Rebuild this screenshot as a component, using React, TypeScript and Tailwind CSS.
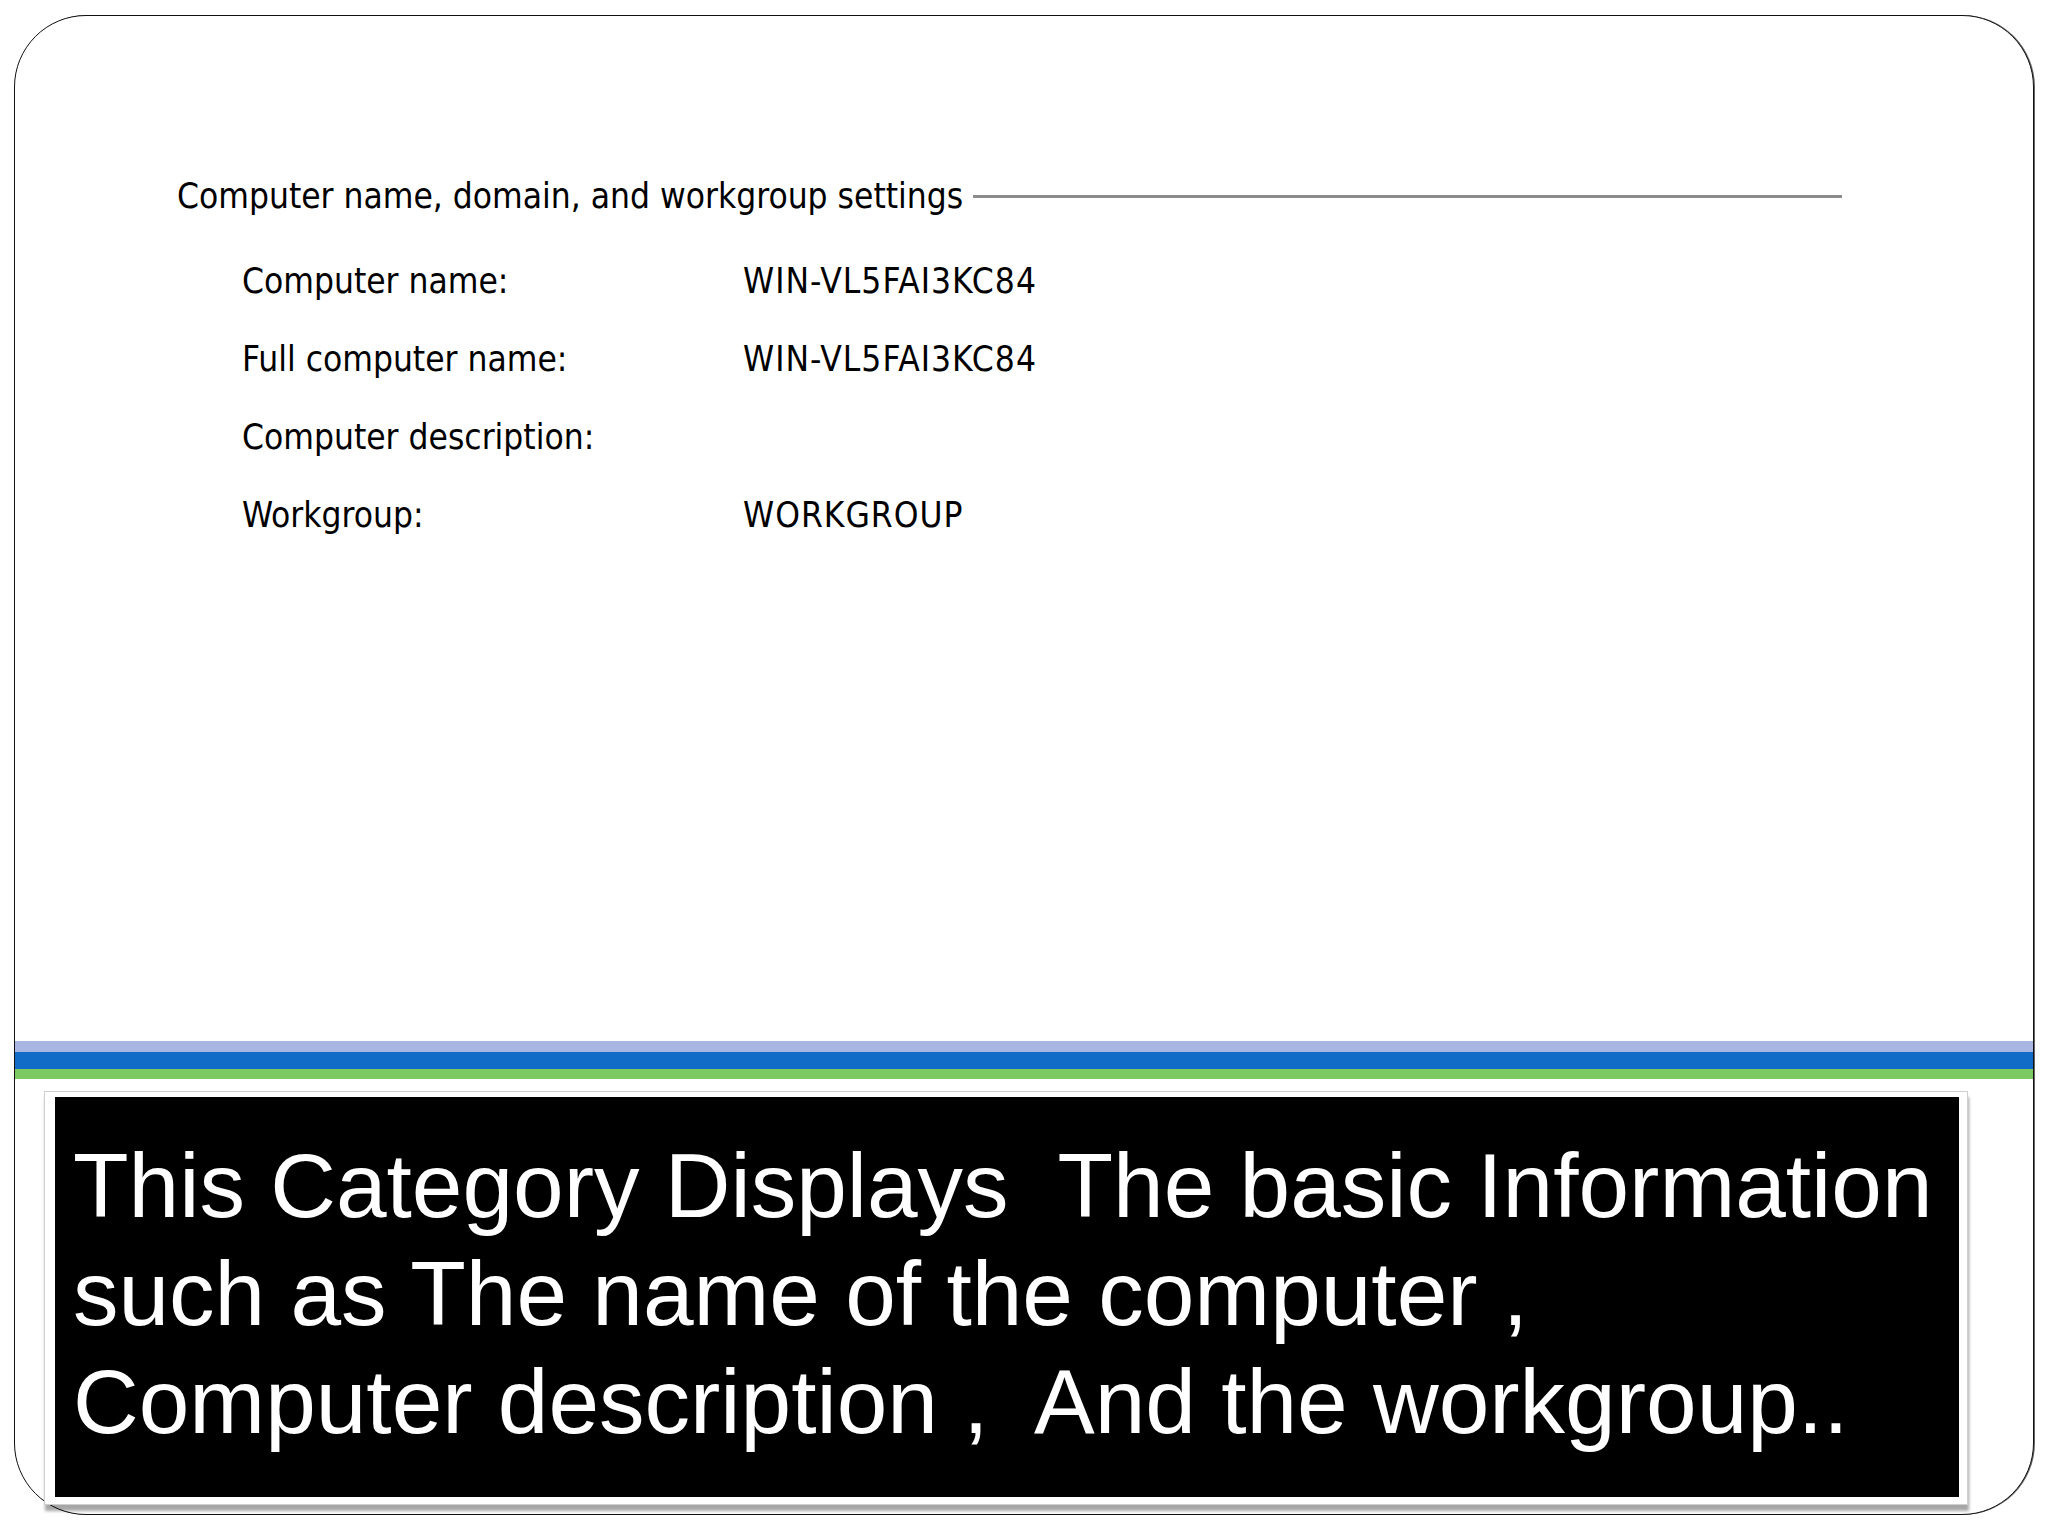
import React from "react";

const rows: { label: string; value: string }[] = [
  { label: "Computer name:", value: "WIN-VL5FAI3KC84" },
  { label: "Full computer name:", value: "WIN-VL5FAI3KC84" },
  { label: "Computer description:", value: "" },
  { label: "Workgroup:", value: "WORKGROUP" },
];

export default function App() {
  return (
    <div className="w-[2048px] h-[1536px] bg-white pl-[14px] pt-[15px] overflow-hidden">
      <div className="w-[2020px] h-[1500px] rounded-[72px] border border-[#111] shadow-[1px_0_0_#666] bg-white flex flex-col">
        {/* Windows settings area */}
        <div
          className="h-[1025px] pt-[160px] pl-[162px] pr-[191px] text-black text-[35px] leading-[40px] font-stretch-condensed"
          style={{ fontFamily: '"DejaVu Sans Condensed", "DejaVu Sans", sans-serif' }}
        >
          <div className="flex items-center">
            <span className="whitespace-nowrap">Computer name, domain, and workgroup settings</span>
            <div className="ml-[10px] flex-1 h-[3px] bg-[#8c8c8c]" />
          </div>
          <div className="mt-[45px] pl-[65px] flex flex-col gap-[38px]">
            {rows.map((r) => (
              <div key={r.label} className="flex h-[40px]">
                <div className="w-[501px] whitespace-nowrap">{r.label}</div>
                <div className="whitespace-nowrap tracking-[1px]">{r.value}</div>
              </div>
            ))}
          </div>
        </div>

        {/* Stripes */}
        <div className="h-[11px] bg-[#aab6e2]" />
        <div className="h-[17px] bg-[#106cc6]" />
        <div className="h-[10px] bg-[#7cc962]" />

        {/* Caption box */}
        <div className="mt-[12px] ml-[29px] w-[1924px] bg-white border border-[#cfcfcf] pt-[5px] pl-[10px] pr-[8px] pb-[7px] shadow-[1px_6px_3px_rgba(0,0,0,0.35)]">
          <div
            className="w-[1904px] h-[400px] bg-black text-white pl-[18px] pt-[35px] text-[91px] leading-[108px]"
            style={{ fontFamily: '"Liberation Sans", Arial, sans-serif' }}
          >
            <div className="whitespace-pre">This Category Displays  The basic Information</div>
            <div className="whitespace-pre">such as The name of the computer ,</div>
            <div className="whitespace-pre">Computer description ,  And the workgroup..</div>
          </div>
        </div>
      </div>
    </div>
  );
}
